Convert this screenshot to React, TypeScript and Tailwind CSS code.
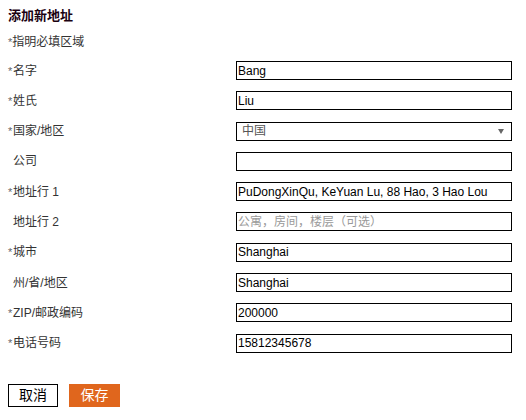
import { ChangeEvent, useState } from "react";

type Field = {
    key: string;
    label: string;
    suffix?: string;
    required: boolean;
    placeholder?: string;
};

const fields: Field[] = [
    { key: "firstName", label: "名字", required: true },
    { key: "lastName", label: "姓氏", required: true },
    { key: "country", label: "国家/地区", required: true },
    { key: "company", label: "公司", required: false },
    { key: "address1", label: "地址行", suffix: "1", required: true },
    { key: "address2", label: "地址行", suffix: "2", required: false, placeholder: "公寓，房间，楼层（可选）" },
    { key: "city", label: "城市", required: true },
    { key: "state", label: "州/省/地区", required: false },
    { key: "zip", label: "ZIP/邮政编码", required: true },
    { key: "phone", label: "电话号码", required: true },
];

const fontStack = "font-['Liberation_Sans','Noto_Sans_CJK_SC',sans-serif]";

export default function App() {
    const [values, setValues] = useState<Record<string, string>>({
        firstName: "Bang",
        lastName: "Liu",
        country: "中国",
        company: "",
        address1: "PuDongXinQu, KeYuan Lu, 88 Hao, 3 Hao Lou",
        address2: "",
        city: "Shanghai",
        state: "Shanghai",
        zip: "200000",
        phone: "15812345678",
    });

    const update = (key: string) => (e: ChangeEvent<HTMLInputElement | HTMLSelectElement>) =>
        setValues({ ...values, [key]: e.target.value });

    return (
        <div className={`w-[526px] h-[420px] bg-white px-2 pt-[8px] text-[12px] text-[#333] ${fontStack}`}>
            <h2 className="font-bold text-[13px] leading-[16px] text-[#1a0010]">添加新地址</h2>
            <p className="mt-[10px] leading-[16px]">
                <span className="text-[#666] text-[11px] align-top">*</span>指明必填区域
            </p>

            <form className="mt-[11px] flex flex-col gap-[11.3px]" onSubmit={e => e.preventDefault()}>
                {fields.map(f => (
                    <div key={f.key} className="flex items-center h-[19px]">
                        <label className="w-[228px] leading-[16px]">
                            {f.required ? (
                                <span className="text-[#666] text-[11px] align-top inline-block w-[5px]">*</span>
                            ) : (
                                <span className="inline-block w-[5px]" />
                            )}
                            {f.label}
                            {f.suffix && <span> {f.suffix}</span>}
                        </label>
                        {f.key === "country" ? (
                            <div className="relative w-[276px] h-[19px]">
                                <select
                                    value={values.country}
                                    onChange={update("country")}
                                    className="appearance-none w-full h-full border border-black bg-white pl-[5px] text-[12px] text-[#555] outline-none leading-[17px]"
                                >
                                    <option>中国</option>
                                </select>
                                <span className="pointer-events-none absolute right-[8px] top-[7px] w-0 h-0 border-l-[3px] border-r-[3px] border-t-[5px] border-l-transparent border-r-transparent border-t-[#666]" />
                            </div>
                        ) : (
                            <input
                                value={values[f.key]}
                                placeholder={f.placeholder}
                                onChange={update(f.key)}
                                className="w-[276px] h-[19px] border border-black bg-white px-[1px] text-[12px] text-black placeholder:text-[#999] outline-none"
                            />
                        )}
                    </div>
                ))}

                <div className="flex gap-[11px] mt-[20px]">
                    <button type="button" className="w-[50px] h-[23px] border border-black bg-white text-[14px] text-black">
                        取消
                    </button>
                    <button type="submit" className="w-[51px] h-[23px] bg-[#e0661d] text-[14px] text-white">
                        保存
                    </button>
                </div>
            </form>
        </div>
    );
}
